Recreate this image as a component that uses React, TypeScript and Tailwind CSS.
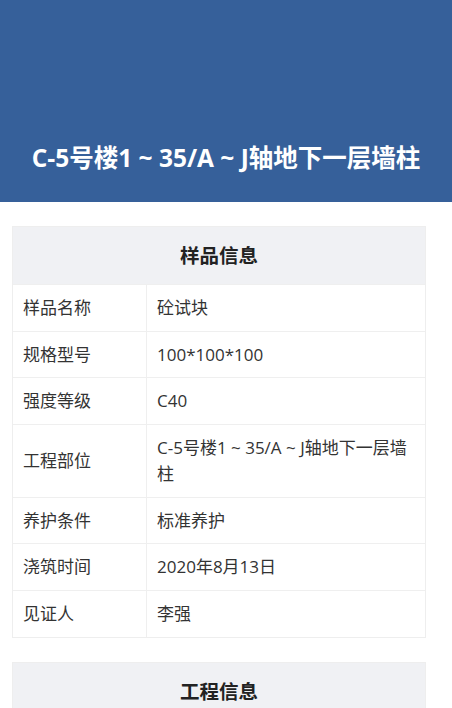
const sampleRows: [string, string][] = [
  ["样品名称", "砼试块"],
  ["规格型号", "100*100*100"],
  ["强度等级", "C40"],
  ["工程部位", "C-5号楼1 ~ 35/A ~ J轴地下一层墙柱"],
  ["养护条件", "标准养护"],
  ["浇筑时间", "2020年8月13日"],
  ["见证人", "李强"],
];

const projectRows: [string, string][] = [
  ["工程名称", "C-5号楼"],
  ["施工单位", "建设集团"],
];

function InfoCard({ title, rows }: { title: string; rows: [string, string][] }) {
  return (
    <section className="border border-[#eeeeee] bg-white">
      <div className="flex h-[57px] items-center justify-center bg-[#f0f1f4] text-[19.5px] font-bold text-[#222]">
        {title}
      </div>
      {rows.map(([k, v]) => (
        <div key={k} className="flex border-t border-[#efefef] text-[17px] leading-[25.7px] text-[#333]">
          <div className="flex w-[134px] shrink-0 items-center border-r border-[#efefef] px-[10px] py-[10px]">
            {k}
          </div>
          <div className="flex-1 px-[10px] py-[10px]">{v}</div>
        </div>
      ))}
    </section>
  );
}

export default function App() {
  return (
    <main
      className="min-h-screen bg-white"
      style={{ fontFamily: '"Open Sans", "Noto Sans CJK SC", sans-serif' }}
    >
      <header className="flex h-[202px] items-end justify-center bg-[#36609a] pb-[27px]">
        <h1 className="text-[24.5px] font-bold leading-[34px] text-white">C-5号楼1 ~ 35/A ~ J轴地下一层墙柱</h1>
      </header>
      <div className="flex flex-col gap-[24px] px-[12px] pt-[24px] pb-6 pr-[26px]">
        <InfoCard title="样品信息" rows={sampleRows} />
        <InfoCard title="工程信息" rows={projectRows} />
      </div>
    </main>
  );
}
